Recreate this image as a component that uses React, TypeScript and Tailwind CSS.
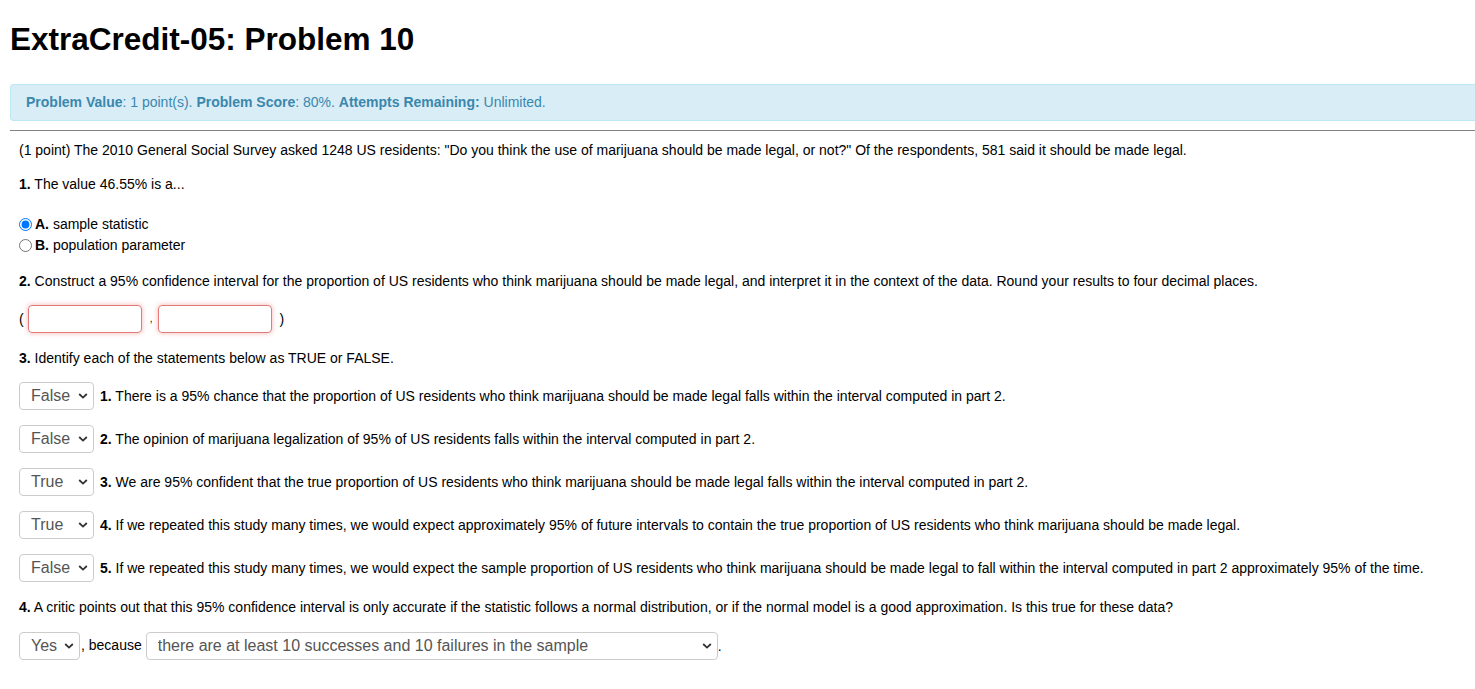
import React from "react";

const font = "font-['Liberation_Sans',Arial,sans-serif]";

function Chevron() {
  return (
    <svg width="10" height="7" viewBox="0 0 10 7" className="pointer-events-none absolute right-[6px] top-1/2 -translate-y-1/2">
      <path d="M1.2 1.5l3.8 3.6 3.8-3.6" fill="none" stroke="#333" strokeWidth="1.8" />
    </svg>
  );
}

function Select({ value, width }: { value: string; width: string }) {
  return (
    <div className={`relative h-[28px] shrink-0 ${width}`}>
      <select
        defaultValue={value}
        className={`h-full w-full appearance-none rounded-[4px] border border-[#ccc] bg-white pl-[11px] pr-[20px] text-[16px] text-[#555] ${font} outline-none`}
      >
        <option>{value}</option>
      </select>
      <Chevron />
    </div>
  );
}

const statements: [string, string, string][] = [
  ["False", "1.", "There is a 95% chance that the proportion of US residents who think marijuana should be made legal falls within the interval computed in part 2."],
  ["False", "2.", "The opinion of marijuana legalization of 95% of US residents falls within the interval computed in part 2."],
  ["True", "3.", "We are 95% confident that the true proportion of US residents who think marijuana should be made legal falls within the interval computed in part 2."],
  ["True", "4.", "If we repeated this study many times, we would expect approximately 95% of future intervals to contain the true proportion of US residents who think marijuana should be made legal."],
  ["False", "5.", "If we repeated this study many times, we would expect the sample proportion of US residents who think marijuana should be made legal to fall within the interval computed in part 2 approximately 95% of the time."],
];

export default function App() {
  return (
    <div className={`min-h-screen bg-white pl-[10px] ${font} text-[14px] text-black`}>
      <h1 className="pt-[21px] text-[31.5px] font-bold leading-[36px] text-black">ExtraCredit-05: Problem 10</h1>

      <div className="mt-[27px] rounded-l-[4px] border border-r-0 border-[#bce8f1] bg-[#d9edf7] py-[8px] pl-[15px] leading-[19px] text-[#3a87ad]">
        <b>Problem Value</b>: 1 point(s). <b>Problem Score</b>: 80%. <b>Attempts Remaining:</b> Unlimited.
      </div>

      <div className="mt-[9px] border-t border-[#808080]" />

      <div className="pl-[9px] pt-[9px] leading-[20px]">
        <p>
          (1 point) The 2010 General Social Survey asked 1248 US residents: "Do you think the use of marijuana should be made legal, or not?" Of the respondents, 581 said it should be made legal.
        </p>

        <p className="mt-[14px]">
          <b>1.</b> The value 46.55% is a...
        </p>

        <div className="mt-[20px] flex flex-col leading-[21px]">
          <label className="flex items-center">
            <input type="radio" name="q1" defaultChecked className="m-0 mr-[3px] h-[13px] w-[13px]" />
            <span><b>A.</b> sample statistic</span>
          </label>
          <label className="flex items-center">
            <input type="radio" name="q1" className="m-0 mr-[3px] h-[13px] w-[13px]" />
            <span><b>B.</b> population parameter</span>
          </label>
        </div>

        <p className="mt-[15px]">
          <b>2.</b> Construct a 95% confidence interval for the proportion of US residents who think marijuana should be made legal, and interpret it in the context of the data. Round your results to four decimal places.
        </p>

        <div className="mt-[14px] flex h-[28px] items-center">
          <span>(</span>
          <input className="ml-[4px] h-[28px] w-[114px] rounded-[4px] border border-[#e07b79] shadow-[0_0_5px_rgba(230,80,75,0.45)] outline-none" />
          <span className="ml-[8px] mr-[6px] text-[10px]">,</span>
          <input className="h-[28px] w-[114px] rounded-[4px] border border-[#e07b79] shadow-[0_0_5px_rgba(230,80,75,0.45)] outline-none" />
          <span className="ml-[7px]">)</span>
        </div>

        <p className="mt-[15px]">
          <b>3.</b> Identify each of the statements below as TRUE or FALSE.
        </p>

        <div className="mt-[14px] flex flex-col gap-[15px]">
          {statements.map(([v, n, t]) => (
            <div key={n} className="flex h-[28px] items-center">
              <Select value={v} width="w-[75px]" />
              <span className="ml-[6px]">
                <b>{n}</b> {t}
              </span>
            </div>
          ))}
        </div>

        <p className="mt-[15px]">
          <b>4.</b> A critic points out that this 95% confidence interval is only accurate if the statistic follows a normal distribution, or if the normal model is a good approximation. Is this true for these data?
        </p>

        <div className="mt-[15px] flex h-[28px] items-center">
          <Select value="Yes" width="w-[61px]" />
          <span className="ml-[1px] mr-[4px] -translate-y-[1px]">, because</span>
          <Select value="there are at least 10 successes and 10 failures in the sample" width="w-[572px]" />
          <span>.</span>
        </div>
      </div>
    </div>
  );
}
